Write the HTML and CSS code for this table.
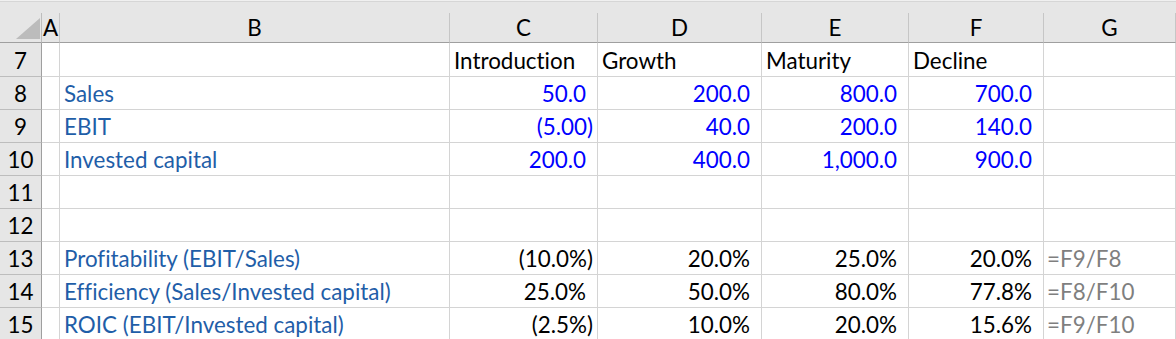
FILE: index.html
```html
<!DOCTYPE html>
<html lang="en">
<head>
<meta charset="utf-8">
<title>Sheet</title>
<link rel="stylesheet" href="styles.css">
</head>
<body>
<div class="sheet">
  <div class="topstrip"></div>

  <div class="corner"><span class="tri"></span></div>
  <div class="colhead">A</div>
  <div class="colhead">B</div>
  <div class="colhead">C</div>
  <div class="colhead">D</div>
  <div class="colhead">E</div>
  <div class="colhead">F</div>
  <div class="colhead">G</div>

  <div class="rowhead first">7</div>
  <div class="cell first"></div>
  <div class="cell first"></div>
  <div class="cell first txt">Introduction</div>
  <div class="cell first txt">Growth</div>
  <div class="cell first txt">Maturity</div>
  <div class="cell first txt">Decline</div>
  <div class="cell first"></div>

  <div class="rowhead">8</div>
  <div class="cell"></div>
  <div class="cell label">Sales</div>
  <div class="cell num input pos">50.0</div>
  <div class="cell num input pos">200.0</div>
  <div class="cell num input pos">800.0</div>
  <div class="cell num input pos">700.0</div>
  <div class="cell"></div>

  <div class="rowhead">9</div>
  <div class="cell"></div>
  <div class="cell label">EBIT</div>
  <div class="cell num input neg">(5.00)</div>
  <div class="cell num input pos">40.0</div>
  <div class="cell num input pos">200.0</div>
  <div class="cell num input pos">140.0</div>
  <div class="cell"></div>

  <div class="rowhead">10</div>
  <div class="cell"></div>
  <div class="cell label">Invested capital</div>
  <div class="cell num input pos">200.0</div>
  <div class="cell num input pos">400.0</div>
  <div class="cell num input pos">1,000.0</div>
  <div class="cell num input pos">900.0</div>
  <div class="cell"></div>

  <div class="rowhead">11</div>
  <div class="cell"></div><div class="cell"></div><div class="cell"></div><div class="cell"></div><div class="cell"></div><div class="cell"></div><div class="cell"></div>

  <div class="rowhead">12</div>
  <div class="cell"></div><div class="cell"></div><div class="cell"></div><div class="cell"></div><div class="cell"></div><div class="cell"></div><div class="cell"></div>

  <div class="rowhead">13</div>
  <div class="cell"></div>
  <div class="cell label">Profitability (EBIT/Sales)</div>
  <div class="cell num neg">(10.0%)</div>
  <div class="cell num pos">20.0%</div>
  <div class="cell num pos">25.0%</div>
  <div class="cell num pos">20.0%</div>
  <div class="cell formula">=F9/F8</div>

  <div class="rowhead">14</div>
  <div class="cell"></div>
  <div class="cell label">Efficiency (Sales/Invested capital)</div>
  <div class="cell num pos">25.0%</div>
  <div class="cell num pos">50.0%</div>
  <div class="cell num pos">80.0%</div>
  <div class="cell num pos">77.8%</div>
  <div class="cell formula">=F8/F10</div>

  <div class="rowhead">15</div>
  <div class="cell"></div>
  <div class="cell label">ROIC (EBIT/Invested capital)</div>
  <div class="cell num neg">(2.5%)</div>
  <div class="cell num pos">10.0%</div>
  <div class="cell num pos">20.0%</div>
  <div class="cell num pos">15.6%</div>
  <div class="cell formula">=F9/F10</div>
</div>
</body>
</html>
```
FILE: styles.css
```css
html, body {
  margin: 0;
  padding: 0;
  background: #ffffff;
}

body {
  width: 1176px;
  height: 339px;
  overflow: hidden;
  font-family: Lato, "Noto Sans", sans-serif;
  font-size: 22.4px;
  font-variant-ligatures: none;
  color: #000000;
}

.sheet {
  display: grid;
  grid-template-columns: 42px 18px 390px 148px 164px 147px 135px 132px;
  grid-template-rows: 13px 30px 34px repeat(8, 33px);
}

.topstrip {
  grid-column: 1 / -1;
  background: #e6e6e6;
  border-top: 1px solid #f0f0f0;
  box-shadow: inset 0 1px 0 #d6d6d6;
}

.corner,
.colhead,
.rowhead {
  background: #e6e6e6;
  box-sizing: border-box;
}

.corner {
  border-right: 1px solid #bdbdbd;
  border-bottom: 1px solid #9f9f9f;
  display: flex;
  justify-content: flex-end;
  align-items: flex-end;
  padding: 0 1px 3px 0;
}

.tri {
  width: 0;
  height: 0;
  border-left: 24px solid transparent;
  border-bottom: 21px solid #bcbcbc;
}

.colhead {
  border-right: 1px solid #c6c6c6;
  border-bottom: 1px solid #9f9f9f;
  display: flex;
  justify-content: center;
  align-items: flex-end;
  line-height: 24px;
  padding-bottom: 2px;
}

.rowhead {
  border-right: 1px solid #9f9f9f;
  border-bottom: 1px solid #bdbdbd;
  display: flex;
  justify-content: center;
  align-items: flex-end;
  line-height: 24px;
  padding-bottom: 3px;
}

.cell {
  box-sizing: border-box;
  border-right: 1px solid #d4d4d4;
  border-bottom: 1px solid #d4d4d4;
  display: flex;
  align-items: flex-end;
  line-height: 24px;
  padding: 0 4px 3px 4px;
  white-space: nowrap;
}

.label {
  color: #1f5ea8;
}

.num {
  justify-content: flex-end;
}

.num.pos {
  padding-right: 11px;
}

.num.neg {
  padding-right: 4px;
}

.input {
  color: #0000ff;
}

.formula {
  color: #7f7f7f;
  padding-left: 3px;
}
```
